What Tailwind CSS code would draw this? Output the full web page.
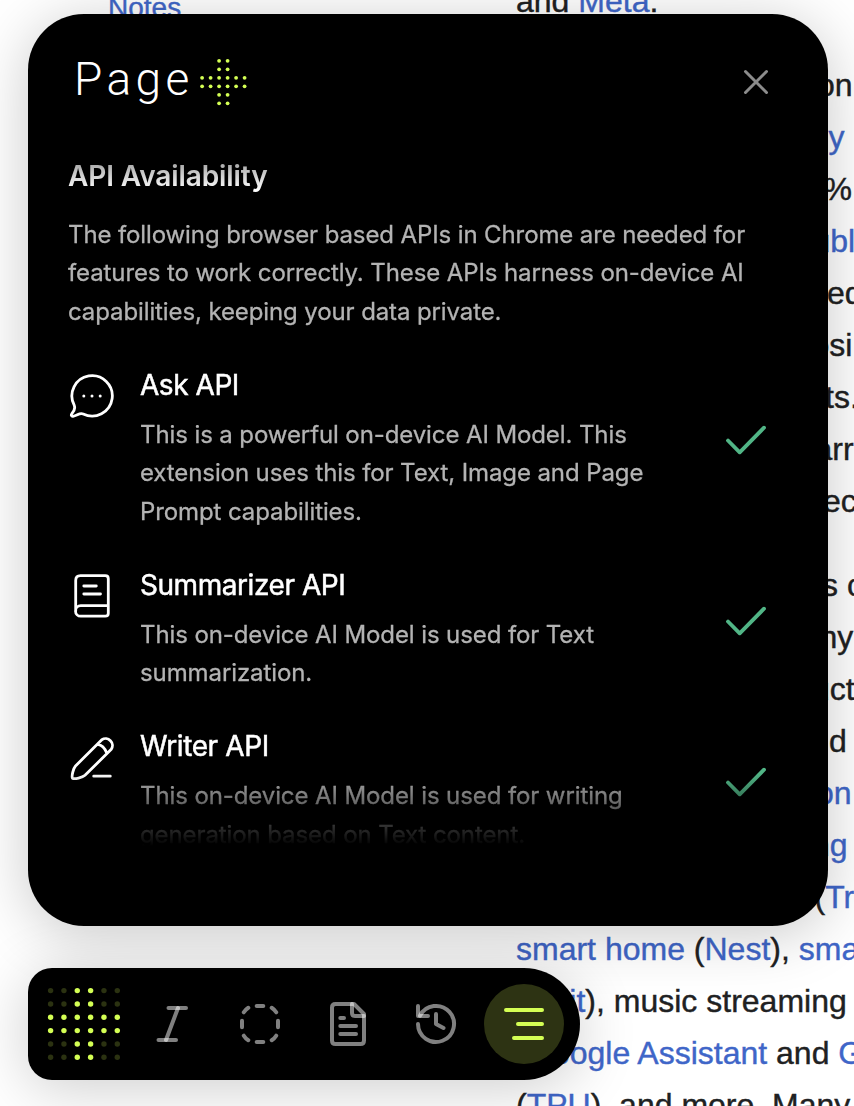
<!DOCTYPE html>
<html lang="en">
<head>
<meta charset="utf-8">
<title>Page+</title>
<script src="https://cdn.jsdelivr.net/npm/@tailwindcss/browser@4"></script>
</head>
<body class="relative h-[1106px] w-[854px] overflow-hidden bg-white font-['Liberation_Sans',Arial,sans-serif]">

<!-- article behind the panel -->
<div class="flex h-[1106px] overflow-hidden text-[#202122] [-webkit-text-stroke:0.4px]">
  <div class="w-[516px] shrink-0 pl-[108px] text-[28px] leading-[46px] text-[#3f66c8]"><p class="-mt-[15px]">Notes</p></div>
  <div class="-mt-[25px] shrink-0 whitespace-nowrap text-[32px] leading-[52px]">
    <p class="mb-8">and <a class="text-[#3f66c8]">Meta</a>.</p>
    <div class="mb-8">
      <p class="pl-[301px]">on</p>
      <p class="pl-[312.5px] text-[#3f66c8]">y</p>
      <p class="pl-[307.5px]">%</p>
      <p class="pl-[296.5px] text-[#3f66c8]">ubl</p>
      <p class="pl-[311px]">ed</p>
      <p class="pl-[295.5px]">osi</p>
      <p class="pl-[309px]">ts.</p>
      <p class="pl-[298.5px]">arr</p>
      <p class="pl-[307px]">ec</p>
    </div>
    <p class="pl-[306px]">s c</p>
    <p class="pl-[303.5px]">ny</p>
    <p class="pl-[296px]">uct</p>
    <p class="pl-[313px]">d</p>
    <p class="pl-[300px] text-[#3f66c8]">on</p>
    <p class="pl-[296px] text-[#3f66c8]">ng</p>
    <p class="pl-[298.5px]">(<a class="text-[#3f66c8]">Tra</a></p>
    <p><a class="text-[#3f66c8]">smart home</a> (<a class="text-[#3f66c8]">Nest</a>), <a class="text-[#3f66c8]">smart</a></p>
    <p><a class="text-[#3f66c8]">Fitbit</a>), music streaming</p>
    <p class="pl-[11px]"><a class="text-[#3f66c8]">Google Assistant</a> and <a class="text-[#3f66c8]">G</a></p>
    <p>(<a class="text-[#3f66c8]">TPU</a>), and more. Many</p>
  </div>
</div>

<!-- overlay: panel and toolbar -->
<div class="absolute inset-0 flex flex-col items-start gap-[42px] pl-7 pt-[14px] font-[Inter,sans-serif]">
  <section class="flex h-[912px] w-[800px] flex-col rounded-[56px] bg-black shadow-[0_8px_60px_rgba(0,0,0,0.22)]">
    <header class="flex h-[98px] shrink-0 items-start justify-between pl-[46px] pr-[58px]">
      <div class="flex">
        <span class="w-[124px] pt-[35px] font-[Roboto,sans-serif] text-[46px] font-light leading-[60px] tracking-[4.4px] text-white">Page</span>
        <svg class="mt-[42px]" width="52" height="52" viewBox="198 56 52 52" fill="#d4ff54">
          <g id="logo"></g>
        </svg>
      </div>
      <svg class="mt-[54px]" width="28" height="28" viewBox="0 0 28 28" fill="none" stroke="#8c8c8c" stroke-width="3" stroke-linecap="round"><path d="M3.5 3.5 24.5 24.5M24.5 3.5 3.5 24.5"/></svg>
    </header>
    <div class="flex h-[734px] flex-col overflow-hidden px-10 [mask-image:linear-gradient(to_bottom,transparent,#000_78px,#000_661px,transparent)]">
      <h1 class="mt-[44px] text-[28px] font-semibold leading-[40px] tracking-[-0.1px] text-white">API Availability</h1>
      <p class="mt-[20px] whitespace-pre text-[24px] leading-[38.4px] tracking-[-0.11px] text-[#b3b3b3] [-webkit-text-stroke:0.3px]">The following browser based APIs in Chrome are needed for
features to work correctly. These APIs harness on-device AI
capabilities, keeping your data private.</p>

      <article class="mt-[17.6px] flex shrink-0 items-center">
        <svg class="mt-[21.2px] w-12 self-start" width="48" height="52" viewBox="68 370 48 52" fill="none" stroke="#fff" stroke-width="2.8" stroke-linecap="round" stroke-linejoin="round"><path d="M74.2 405.2A20.2 20.2 0 1 1 83.2 414C79.500 412.400 77.200 415.800 73 416.300C71.300 416.500 70.900 414.900 71.800 413.800C74.200 411.200 75.400 408.300 74.200 405.200Z"/><g fill="#fff" stroke="none"><circle cx="83.800" cy="396" r="1.500"/><circle cx="92" cy="396" r="1.500"/><circle cx="100.200" cy="396" r="1.500"/></g></svg>
        <div class="ml-6 w-[560px] pt-4 text-white">
          <h2 class="text-[28px] leading-[40px] tracking-[-0.45px] [-webkit-text-stroke:0.5px]">Ask API</h2>
          <p class="mt-[11px] whitespace-pre text-[24px] leading-[38.4px] tracking-[-0.1px] text-[#b3b3b3] [-webkit-text-stroke:0.3px]">This is a powerful on-device AI Model. This
extension uses this for Text, Image and Page
Prompt capabilities.</p>
        </div>
        <svg class="ml-[22px]" width="48" height="32" viewBox="722 424 48 32" fill="none" stroke="#51b586" stroke-width="3.800" stroke-linecap="round" stroke-linejoin="round"><path d="M728 440.500 739.700 452.300 764 427.700"/></svg>
      </article>

      <article class="mt-[17.8px] flex shrink-0 items-center">
        <svg class="mt-[21.2px] w-12 self-start" width="48" height="52" viewBox="68 570 48 52" fill="none" stroke="#fff" stroke-width="2.800" stroke-linecap="round" stroke-linejoin="round"><path d="M75.700 611V580.500Q75.700 575.700 80.500 575.700H105.300Q108.300 575.700 108.300 578.700V613.200Q108.300 616.200 105.300 616.200H80.800A5.300 5.300 0 0 1 80.800 605.600H108.300M83.800 586H96.300M83.800 594H100.500"/></svg>
        <div class="ml-6 w-[560px] pt-4 text-white">
          <h2 class="text-[28px] leading-[40px] tracking-[-0.45px] [-webkit-text-stroke:0.5px]">Summarizer API</h2>
          <p class="mt-[11px] whitespace-pre text-[24px] leading-[38.4px] tracking-[-0.1px] text-[#b3b3b3] [-webkit-text-stroke:0.3px]">This on-device AI Model is used for Text
summarization.</p>
        </div>
        <svg class="ml-[22px]" width="48" height="32" viewBox="722 424 48 32" fill="none" stroke="#51b586" stroke-width="3.800" stroke-linecap="round" stroke-linejoin="round"><path d="M728 440.500 739.700 452.300 764 427.700"/></svg>
      </article>

      <article class="mt-[17.6px] flex shrink-0 items-center">
        <svg class="mt-[20.500px] w-12 self-start" width="48" height="52" viewBox="68 731 48 52" fill="none" stroke="#fff" stroke-width="2.800" stroke-linecap="round" stroke-linejoin="round"><path d="M72.500 778.300C71.400 776.500 73.200 768.500 75.500 766L101.800 739.700A6.900 6.900 0 0 1 111.300 749.300L85 775.300C82.500 777.500 74.500 779.500 72.500 778.300ZM97.700 744.300Q103.700 745.300 106.500 752.500M93.700 776.200H110.300"/></svg>
        <div class="ml-6 w-[560px] pt-4 text-white">
          <h2 class="text-[28px] leading-[40px] tracking-[-0.4px] [-webkit-text-stroke:0.5px]">Writer API</h2>
          <p class="mt-[11px] whitespace-pre text-[24px] leading-[38.4px] tracking-[-0.1px] text-[#b3b3b3] [-webkit-text-stroke:0.3px]">This on-device AI Model is used for writing
generation based on Text content.</p>
        </div>
        <svg class="ml-[22px]" width="48" height="32" viewBox="722 424 48 32" fill="none" stroke="#51b586" stroke-width="3.800" stroke-linecap="round" stroke-linejoin="round"><path d="M728 440.500 739.700 452.300 764 427.700"/></svg>
      </article>
    </div>
  </section>

  <nav class="flex h-28 w-[552px] items-center rounded-l-[24px] rounded-r-[56px] bg-black shadow-[0_8px_60px_rgba(0,0,0,0.2)]">
    <svg class="ml-4" width="80" height="80" viewBox="44 984 80 80"><g id="grid"></g></svg>
    <svg class="ml-6" width="48" height="48" viewBox="148 1000 48 48" fill="none" stroke="#fff" stroke-opacity=".5" stroke-width="4" stroke-linecap="round"><path d="M168.500 1008H186"/><path d="M158.500 1040H176"/><path d="M178 1008 166 1040"/></svg>
    <svg class="ml-10" width="48" height="48" viewBox="236 1000 48 48" fill="none" stroke="#808080" stroke-width="4" stroke-linecap="round"><path d="M256.700 1006H263.300M256.700 1042H263.300M242 1020.700V1027.300M278 1020.700V1027.300M243.800 1012.300Q245.500 1009.500 248.300 1007.800M276.200 1012.300Q274.500 1009.500 271.700 1007.800M243.800 1035.700Q245.500 1038.500 248.300 1040.200M276.200 1035.700Q274.500 1038.500 271.700 1040.200"/></svg>
    <svg class="ml-10" width="48" height="48" viewBox="324 1000 48 48" fill="none" stroke="#fff" stroke-opacity=".5" stroke-width="4" stroke-linecap="round" stroke-linejoin="round"><path d="M354 1004H335.500Q332 1004 332 1007.500V1040.500Q332 1044 335.500 1044H360.500Q364 1044 364 1040.500V1014Z"/><path d="M352 1004V1013Q352 1016 355 1016H364"/><path d="M340.300 1018H344M340.300 1026H356M340.300 1034H356"/></svg>
    <svg class="ml-10" width="48" height="48" viewBox="412 1000 48 48" fill="none" stroke="#fff" stroke-opacity=".5" stroke-width="4" stroke-linecap="round" stroke-linejoin="round"><path d="M418 1024A18 18 0 1 0 420 1015.700"/><path d="M418 1006V1016H428"/><path d="M436 1014V1024L443.500 1028"/></svg>
    <div class="ml-6 flex size-20 items-center justify-center rounded-full bg-[#2d3313]">
      <svg width="48" height="48" viewBox="500 1000 48 48" fill="none" stroke="#d4ff54" stroke-width="4" stroke-linecap="round"><path d="M506 1010H542M518 1024H542M514 1038H542"/></svg>
    </div>
  </nav>
</div>

<script>
  // Dot matrices: a plus sign, with optional dimmed dots around it.
  const NS = "http://www.w3.org/2000/svg";
  function dots(id, x0, y0, pitch, r, dim) {
    const g = document.getElementById(id);
    for (let row = 0; row < 6; row++) for (let col = 0; col < 6; col++) {
      const on = row === 2 || row === 3 || col === 2 || col === 3;
      if (!on && !dim) continue;
      const c = document.createElementNS(NS, "circle");
      c.setAttribute("cx", x0 + col * pitch);
      c.setAttribute("cy", y0 + row * pitch);
      c.setAttribute("r", r);
      c.setAttribute("fill", on ? "#d4ff54" : dim);
      g.appendChild(c);
    }
  }
  dots("logo", 202.1, 60.8, 8.5, 1.9, null);
  dots("grid", 50.6, 990.6, 13.34, 2.7, "#2b3211");
</script>
</body>
</html>
